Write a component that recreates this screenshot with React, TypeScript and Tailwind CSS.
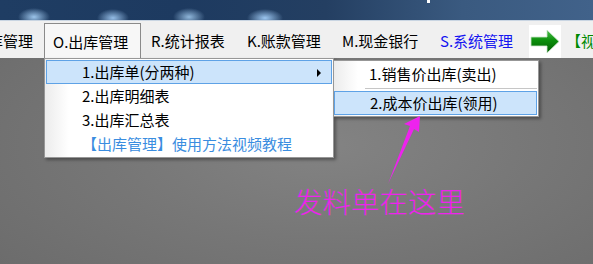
const font = "font-['Microsoft_YaHei','Noto_Sans_CJK_SC',sans-serif]"

function GreenArrow() {
  return (
    <svg width="30" height="26" viewBox="0 0 30 26">
      <defs>
        <linearGradient id="ga" x1="0" y1="0" x2="0" y2="1">
          <stop offset="0" stopColor="#4fc04f" />
          <stop offset="0.45" stopColor="#0b8f0b" />
          <stop offset="1" stopColor="#005c00" />
        </linearGradient>
      </defs>
      <polygon
        points="1,8 17,8 17,1 29,12.5 17,24 17,17 1,17"
        fill="url(#ga)"
        stroke="#c8e6c8"
        strokeWidth="0.8"
      />
    </svg>
  )
}

function MenuRow({
  label,
  active,
  blue,
  sub,
}: {
  label: string
  active?: boolean
  blue?: boolean
  sub?: boolean
}) {
  return (
    <div
      className={`relative mx-[1px] flex h-[24px] items-center border pl-[35px] ${
        active ? 'border-[#5ea2e6] bg-[#cce4fb]' : 'border-transparent'
      } ${blue ? 'text-[#3a8de0]' : 'text-black'}`}
    >
      <span className="whitespace-nowrap">{label}</span>
      {sub && (
        <span className="absolute right-[10px] top-[8px] h-0 w-0 border-y-[4px] border-l-[4px] border-y-transparent border-l-black" />
      )}
    </div>
  )
}

export default function App() {
  return (
    <div
      className={`relative h-[264px] w-[593px] overflow-hidden bg-[radial-gradient(ellipse_at_55%_55%,#838383_0%,#777777_45%,#6a6a6a_100%)] text-[15px] ${font}`}
    >
      {/* window title strip */}
      <div className="relative h-[20px] bg-[radial-gradient(ellipse_16px_9px_at_34px_17px,#9cc4ea,transparent),radial-gradient(ellipse_16px_9px_at_113px_18px,#95bde6,transparent),radial-gradient(ellipse_16px_9px_at_189px_17px,#8fb6da,transparent),radial-gradient(ellipse_18px_9px_at_265px_18px,#9cc6f0,transparent),linear-gradient(90deg,#1f3d63_0%,#1d3a60_30%,#243f62_55%,#3a5a80_78%,#41628a_100%)]">
        <div className="absolute left-[427px] top-0 h-[3px] w-[3px] bg-white" />
      </div>
      <div className="h-[1px] bg-[#c9d5e2]" />

      {/* menu bar */}
      <div className="flex h-[37px] items-start overflow-hidden bg-[#f0f0f0]">
        <div className="flex h-full w-[44px] shrink-0 items-center justify-end overflow-hidden pr-[11px]">
          <span className="whitespace-nowrap pt-[4px]">I.入库管理</span>
        </div>
        <div className="mt-[2px] flex h-[35px] w-[97px] shrink-0 items-center border border-b-0 border-[#8a8a8a] bg-[#f7f7f7] pl-[8px]">
          <span className="whitespace-nowrap pt-[2px]">O.出库管理</span>
        </div>
        <div className="flex h-full w-[95px] shrink-0 items-center pl-[10px]">
          <span className="whitespace-nowrap pt-[4px]">R.统计报表</span>
        </div>
        <div className="flex h-full w-[95px] shrink-0 items-center pl-[11px]">
          <span className="whitespace-nowrap pt-[4px]">K.账款管理</span>
        </div>
        <div className="flex h-full w-[99px] shrink-0 items-center pl-[11px]">
          <span className="whitespace-nowrap pt-[4px]">M.现金银行</span>
        </div>
        <div className="flex h-full w-[99px] shrink-0 items-center pl-[10px] text-[#1515f0]">
          <span className="whitespace-nowrap pt-[4px]">S.系统管理</span>
        </div>
        <div className="mt-[4px] flex h-[33px] w-[32px] shrink-0 items-center justify-center bg-white">
          <GreenArrow />
        </div>
        <div className="flex h-full shrink-0 items-center pl-[5px] text-[#008a00]">
          <span className="whitespace-nowrap pt-[4px]">【视频教程】</span>
        </div>
      </div>

      {/* dropdown */}
      <div className="absolute left-[44px] top-[58px] w-[290px] border border-[#979797] bg-white py-[1px] shadow-[2px_2px_3px_rgba(0,0,0,0.35)]">
        <div className="absolute bottom-0 left-0 top-0 w-[24px] bg-gradient-to-r from-[#ececec] to-white" />
        <MenuRow label="1.出库单(分两种)" active sub />
        <MenuRow label="2.出库明细表" />
        <MenuRow label="3.出库汇总表" />
        <MenuRow label="【出库管理】使用方法视频教程" blue />
      </div>

      {/* submenu */}
      <div className="absolute left-[333px] top-[60px] w-[206px] border border-[#979797] bg-white py-[1px] shadow-[2px_2px_3px_rgba(0,0,0,0.35)]">
        <div className="absolute bottom-0 left-0 top-0 w-[24px] bg-gradient-to-r from-[#ececec] to-white" />
        <div className="relative flex h-[24px] items-center pl-[35px]">
          <span className="whitespace-nowrap">1.销售价出库(卖出)</span>
        </div>
        <div className="relative flex h-[5px] items-center pl-[31px] pr-[1px]">
          <div className="h-[1px] w-full bg-[#c6c6c6]" />
        </div>
        <div className="relative mr-[1px] flex h-[24px] items-center border border-[#5ea2e6] bg-[#cce4fb] pl-[35px]">
          <span className="whitespace-nowrap">2.成本价出库(领用)</span>
        </div>
      </div>

      {/* annotation */}
      <svg className="absolute left-0 top-0" width="593" height="264" viewBox="0 0 593 264">
        <polygon
          points="420,116 419,132 414,129 388,184 410,126 404,124"
          fill="#ee22ee"
        />
      </svg>
      <div className="absolute left-[294px] top-[184px] whitespace-nowrap text-[28.5px] font-light leading-[34px] text-[#ee22ee]">
        发料单在这里
      </div>
    </div>
  )
}
